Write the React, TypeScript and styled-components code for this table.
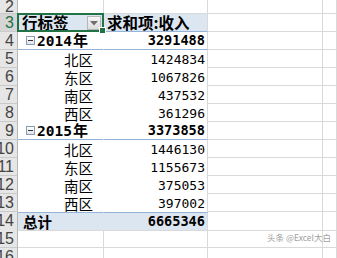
import React from "react";
import styled, { createGlobalStyle, css } from "styled-components";

const Global = createGlobalStyle`
  html, body { margin: 0; padding: 0; background: #ffffff; overflow: hidden; }
  #root { width: 337px; height: 258px; }
`;

const CJK = `"Noto Sans CJK SC", "Noto Sans", sans-serif`;
const MONO = `"DejaVu Sans Mono", "Liberation Mono", monospace`;
const GRID = "#d9d9d9";
const BAND = "#dce6f1";
const BLUE_LINE = "#95b3d7";

const Sheet = styled.div`
  position: relative;
  width: 337px;
  height: 258px;
  overflow: hidden;
  display: flex;
  flex-direction: column;
`;

const Row = styled.div<{ $h: number }>`
  display: grid;
  grid-template-columns: 18px 86px 104px 115px 1fr;
  height: ${(p) => p.$h}px;
  flex: none;
`;

const RowHead = styled.div<{ $active?: boolean }>`
  box-sizing: border-box;
  background: ${(p) => (p.$active ? "#d6d6d6" : "#e6e6e6")};
  border-bottom: 1px solid #cacaca;
  border-right: 1px solid #b8b8b8;
  color: ${(p) => (p.$active ? "#217346" : "#444444")};
  font-family: "Liberation Sans", Arial, sans-serif;
  font-size: 16px;
  display: flex;
  align-items: center;
  justify-content: flex-end;
  padding-right: 3px;
  overflow: hidden;
  white-space: nowrap;
`;

type Kind = "blank" | "head" | "group" | "item" | "total";

const Cell = styled.div<{ $kind: Kind; $gridRight?: boolean; $right?: boolean }>`
  box-sizing: border-box;
  position: relative;
  display: flex;
  align-items: center;
  justify-content: ${(p) => (p.$right ? "flex-end" : "flex-start")};
  white-space: nowrap;
  color: #000;
  border-right: 1px solid ${(p) => (p.$gridRight ? GRID : "transparent")};
  ${(p) =>
    p.$kind === "blank" &&
    css`
      border-right: 1px solid ${GRID};
      border-bottom: 1px solid ${GRID};
    `}
  ${(p) =>
    p.$kind === "head" &&
    css`
      background: ${BAND};
      border-bottom: 1px solid ${BLUE_LINE};
    `}
  ${(p) =>
    p.$kind === "group" &&
    css`
      border-bottom: 1px solid ${BLUE_LINE};
    `}
  ${(p) =>
    p.$kind === "total" &&
    css`
      background: ${BAND};
      border-top: 1px solid ${BLUE_LINE};
      border-bottom: 1px solid ${GRID};
    `}
`;

const Selected = styled(Cell)`
  &::after {
    content: "";
    position: absolute;
    left: -1px;
    top: -1px;
    right: -1px;
    bottom: -1px;
    border: 2px solid #217346;
    pointer-events: none;
  }
  &::before {
    content: "";
    position: absolute;
    right: -3px;
    bottom: -3px;
    width: 5px;
    height: 5px;
    background: #217346;
    border: 1px solid #ffffff;
    z-index: 2;
  }
`;

const HeadText = styled.span<{ $pl: number }>`
  display: block;
  font-family: ${CJK};
  font-weight: 700;
  font-size: 15.5px;
  padding-left: ${(p) => p.$pl}px;
  line-height: 17px;
  height: 17px;
`;

const Label = styled.span<{ $pl: number; $bold?: boolean }>`
  display: block;
  font-family: ${CJK};
  font-weight: ${(p) => (p.$bold ? 700 : 400)};
  font-size: 14.5px;
  padding-left: ${(p) => p.$pl}px;
  line-height: 17px;
  height: 17px;
`;

const Digits = styled.span<{ $bold?: boolean }>`
  display: block;
  font-family: ${MONO};
  font-weight: ${(p) => (p.$bold ? 700 : 400)};
  font-size: ${(p) => (p.$bold ? "13.6px" : "13px")};
  padding-right: 2px;
  line-height: 17px;
  height: 17px;
`;

const YearDigits = styled.span`
  font-family: ${MONO};
  font-weight: 700;
  font-size: 14.5px;
`;

const Year = styled.span`
  font-family: ${CJK};
  font-weight: 700;
  font-size: 15px;
  margin-left: 1px;
`;

const GroupLabel = styled.div`
  display: flex;
  align-items: center;
  padding-left: 8px;
  gap: 2px;
  height: 17px;
  line-height: 17px;
`;

const Toggle = styled.span`
  box-sizing: border-box;
  width: 9px;
  height: 9px;
  border: 1px solid #8a9cb5;
  background: linear-gradient(#ffffff, #dfe4ea);
  display: flex;
  align-items: center;
  justify-content: center;
  flex: none;
  &::before {
    content: "";
    width: 5px;
    height: 1px;
    background: #333;
  }
`;

const DropButton = styled.span`
  position: absolute;
  right: 2px;
  top: 2px;
  box-sizing: border-box;
  width: 14px;
  height: 14px;
  border: 1px solid #b6b6b6;
  background: linear-gradient(#f6f6f6, #dcdcdc);
  display: flex;
  align-items: center;
  justify-content: center;
`;

const Watermark = styled.div`
  position: absolute;
  left: 267px;
  top: 231px;
  font-family: ${CJK};
  font-size: 8.5px;
  line-height: 12px;
  color: #a0a0a0;
  text-shadow: 0 0 1px #ffffff;
  white-space: nowrap;
`;

type Line =
  | { type: "group"; label: string; value: string }
  | { type: "item"; label: string; value: string };

const lines: Line[] = [
  { type: "group", label: "2014", value: "3291488" },
  { type: "item", label: "北区", value: "1424834" },
  { type: "item", label: "东区", value: "1067826" },
  { type: "item", label: "南区", value: "437532" },
  { type: "item", label: "西区", value: "361296" },
  { type: "group", label: "2015", value: "3373858" },
  { type: "item", label: "北区", value: "1446130" },
  { type: "item", label: "东区", value: "1155673" },
  { type: "item", label: "南区", value: "375053" },
  { type: "item", label: "西区", value: "397002" },
];

const BlankRest = () => (
  <>
    <Cell $kind="blank" />
    <Cell $kind="blank" />
  </>
);

export default function App() {
  return (
    <>
      <Global />
      <Sheet>
        <Row $h={14}>
          <RowHead>2</RowHead>
          <Cell $kind="blank" />
          <Cell $kind="blank" />
          <BlankRest />
        </Row>
        <Row $h={18}>
          <RowHead $active>3</RowHead>
          <Selected $kind="head">
            <HeadText $pl={4}>行标签</HeadText>
            <DropButton>
              <svg width="8" height="5" viewBox="0 0 8 5">
                <path d="M0 0 H8 L4 4.5 Z" fill="#6e6e6e" />
              </svg>
            </DropButton>
          </Selected>
          <Cell $kind="head" $gridRight>
            <HeadText $pl={3}>求和项:收入</HeadText>
          </Cell>
          <BlankRest />
        </Row>
        {lines.map((l, i) => (
          <Row $h={18} key={i}>
            <RowHead>{i + 4}</RowHead>
            {l.type === "group" ? (
              <>
                <Cell $kind="group">
                  <GroupLabel>
                    <Toggle />
                    <span>
                      <YearDigits>{l.label}</YearDigits>
                      <Year>年</Year>
                    </span>
                  </GroupLabel>
                </Cell>
                <Cell $kind="group" $gridRight $right>
                  <Digits $bold>{l.value}</Digits>
                </Cell>
              </>
            ) : (
              <>
                <Cell $kind="item">
                  <Label $pl={46}>{l.label}</Label>
                </Cell>
                <Cell $kind="item" $gridRight $right>
                  <Digits>{l.value}</Digits>
                </Cell>
              </>
            )}
            <BlankRest />
          </Row>
        ))}
        <Row $h={18}>
          <RowHead>14</RowHead>
          <Cell $kind="total">
            <Label $pl={5} $bold>
              总计
            </Label>
          </Cell>
          <Cell $kind="total" $gridRight $right>
            <Digits $bold>6665346</Digits>
          </Cell>
          <BlankRest />
        </Row>
        <Row $h={18}>
          <RowHead>15</RowHead>
          <Cell $kind="blank" />
          <Cell $kind="blank" />
          <BlankRest />
        </Row>
        <Row $h={18}>
          <RowHead>16</RowHead>
          <Cell $kind="blank" />
          <Cell $kind="blank" />
          <BlankRest />
        </Row>
        <Watermark>头条 @Excel大白</Watermark>
      </Sheet>
    </>
  );
}
